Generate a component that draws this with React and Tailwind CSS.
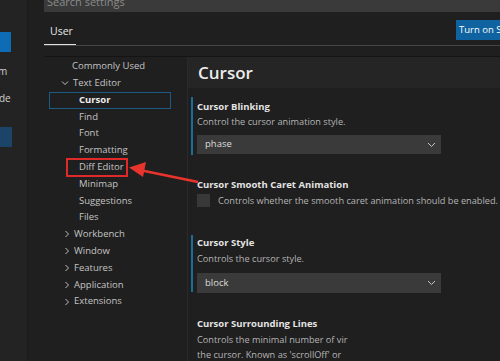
import React from "react";

const Chevron = ({ down }) => (
  <svg width="8" height="8" viewBox="0 0 8 8" className="shrink-0">
    {down ? (
      <path d="M1 2.5 L4 5.5 L7 2.5" fill="none" stroke="#c0c0c0" strokeWidth="1" />
    ) : (
      <path d="M2.5 1 L5.5 4 L2.5 7" fill="none" stroke="#c0c0c0" strokeWidth="1" />
    )}
  </svg>
);

const DropChevron = () => (
  <svg width="9" height="6" viewBox="0 0 9 6">
    <path d="M1 1 L4.5 4.5 L8 1" fill="none" stroke="#c5c5c5" strokeWidth="1" />
  </svg>
);

function TreeRow({ children, indent, chevron, selected, boxed }) {
  return (
    <div className="relative h-[16.8px] flex items-center">
      {selected && (
        <div className="absolute left-[5px] w-[122px] top-0 h-[17px] border border-[#1d5b87]" />
      )}
      {boxed && (
        <div className="absolute left-[22px] w-[62px] -top-[1px] h-[19px] border-2 border-[#e02a2a]" />
      )}
      <div className={`flex items-center ${indent}`}>
        {chevron === "down" && <span className="mr-[4px]"><Chevron down /></span>}
        {chevron === "right" && <span className="mr-[3px]"><Chevron /></span>}
        <span className={selected ? "font-bold text-[#f0f0f0]" : "text-[#c4c4c4]"}>{children}</span>
      </div>
    </div>
  );
}

export default function App() {
  return (
    <div
      className="w-[500px] h-[361px] overflow-hidden bg-[#1f1f1f] flex text-[9.5px] relative"
      style={{ fontFamily: '"Open Sans", "Noto Sans", sans-serif' }}
    >
      {/* left strip */}
      <div className="w-[28px] bg-[#232323] flex flex-col pt-[32px] shrink-0 border-r border-[#1b1b1b] text-[#d0d0d0] text-[10px] leading-none">
        <div className="w-[11px] h-[20px] bg-[#0e6cb5]" />
        <div className="h-[14px]" />
        <div className="h-[10px] flex items-center -ml-[2px]">m</div>
        <div className="h-[17px]" />
        <div className="h-[10px] flex items-center -ml-[1px]">de</div>
        <div className="h-[24px]" />
        <div className="w-[12px] h-[20px] bg-[#1c4468]" />
      </div>

      {/* main */}
      <div className="flex-1 flex flex-col pl-[16px] min-w-0">
        {/* search */}
        <div className="h-[12px] bg-[#3a3a3a] overflow-hidden shrink-0">
          <div className="-mt-[5px] pl-[3px] text-[#8a8a8a] text-[11px] leading-[14px]">Search settings</div>
        </div>
        {/* tabs */}
        <div className="h-[34px] flex items-end justify-between border-b border-[#454545] shrink-0 relative">
          <div className="w-[32px] h-full flex flex-col justify-end">
            <div className="text-[#e8e8e8] text-[10.5px] pl-[6px] pb-[4px]">User</div>
            <div className="h-[1px] bg-[#e0e0e0]" />
          </div>
          <div className="self-start mt-[8px] w-[44px] h-[20px] bg-[#0e63a0] overflow-hidden whitespace-nowrap text-[9.5px] text-white leading-[20px] pl-[3px]">
            Turn on Settings Sync
          </div>
        </div>
        <div className="h-[11px] shrink-0 border-b border-[#141414]" />

        {/* body */}
        <div className="flex flex-1 min-h-0">
          {/* tree */}
          <div className="w-[143px] shrink-0 pt-[1px]">
            <TreeRow indent="pl-[28px]">Commonly Used</TreeRow>
            <TreeRow indent="pl-[17px]" chevron="down">Text Editor</TreeRow>
            <TreeRow indent="pl-[35px]" selected>Cursor</TreeRow>
            <TreeRow indent="pl-[35px]">Find</TreeRow>
            <TreeRow indent="pl-[35px]">Font</TreeRow>
            <TreeRow indent="pl-[35px]">Formatting</TreeRow>
            <TreeRow indent="pl-[35px]" boxed>Diff Editor</TreeRow>
            <TreeRow indent="pl-[35px]">Minimap</TreeRow>
            <TreeRow indent="pl-[35px]">Suggestions</TreeRow>
            <TreeRow indent="pl-[35px]">Files</TreeRow>
            <TreeRow indent="pl-[19px]" chevron="right">Workbench</TreeRow>
            <TreeRow indent="pl-[19px]" chevron="right">Window</TreeRow>
            <TreeRow indent="pl-[19px]" chevron="right">Features</TreeRow>
            <TreeRow indent="pl-[19px]" chevron="right">Application</TreeRow>
            <TreeRow indent="pl-[19px]" chevron="right">Extensions</TreeRow>
          </div>

          {/* settings */}
          <div className="flex-1 min-w-0 border-l border-[#2a2a2a] whitespace-nowrap">
            <div className="h-[31px] bg-[#252525] flex items-center pl-[10px]">
              <span className="text-[17px] font-semibold text-[#ececec] leading-none">Cursor</span>
            </div>

            {/* Cursor Blinking */}
            <div className="mt-[9px] ml-[3px] border-l-2 border-[#1a6e9e] pl-[4px] h-[58px] pt-[2px]">
              <div className="font-bold text-[#e4e4e4] leading-[15px]">Cursor Blinking</div>
              <div className="text-[#b4b4b4] text-[9.2px] leading-[16px]">Control the cursor animation style.</div>
              <div className="mt-[5px] w-[244px] h-[19px] bg-[#3a3a3a] flex items-center justify-between pl-[8px] pr-[5px]">
                <span className="text-[#dcdcdc]">phase</span>
                <DropChevron />
              </div>
            </div>

            {/* Smooth caret */}
            <div className="mt-[22px] pl-[9px]">
              <div className="font-bold text-[#e4e4e4] leading-[15px]">Cursor Smooth Caret Animation</div>
              <div className="flex items-center mt-[2px]">
                <div className="w-[13px] h-[13px] bg-[#383838] shrink-0" />
                <span className="ml-[8px] text-[#b4b4b4] text-[9.2px]">Controls whether the smooth caret animation should be enabled.</span>
              </div>
            </div>

            {/* Cursor Style */}
            <div className="mt-[27px] ml-[3px] border-l-2 border-[#1a6e9e] pl-[4px] h-[57px] pt-[0px]">
              <div className="font-bold text-[#e4e4e4] leading-[15px]">Cursor Style</div>
              <div className="text-[#b4b4b4] text-[9.2px] leading-[17px]">Controls the cursor style.</div>
              <div className="mt-[6px] w-[244px] h-[20px] bg-[#3a3a3a] flex items-center justify-between pl-[8px] pr-[5px]">
                <span className="text-[#dcdcdc]">block</span>
                <DropChevron />
              </div>
            </div>

            {/* Surrounding */}
            <div className="mt-[24px] pl-[9px]">
              <div className="font-bold text-[#e4e4e4] leading-[15px]">Cursor Surrounding Lines</div>
              <div className="text-[#b4b4b4] text-[9.2px] leading-[16px] mt-[1px]">Controls the minimal number of vir</div>
              <div className="text-[#b4b4b4] text-[9.2px] leading-[14px]">the cursor. Known as 'scrollOff' or</div>
            </div>
          </div>
        </div>
      </div>

      {/* red arrow annotation */}
      <svg className="absolute left-0 top-0 pointer-events-none" width="500" height="361" viewBox="0 0 500 361">
        <line x1="198" y1="182" x2="142" y2="170.5" stroke="#e8342c" strokeWidth="2.5" />
        <polygon points="129,167.5 146,162 143,177" fill="#e8342c" />
      </svg>
    </div>
  );
}
